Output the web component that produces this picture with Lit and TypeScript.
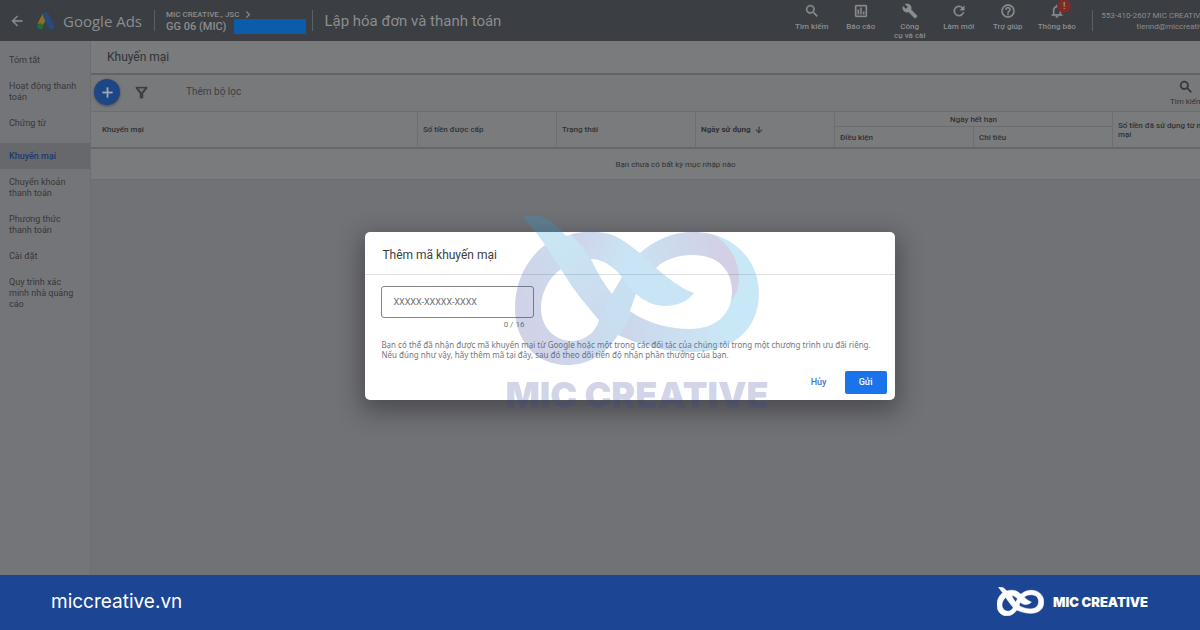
import { LitElement, html, css, svg } from "lit";
import { customElement } from "lit/decorators.js";
import { classMap } from "lit/directives/class-map.js";

const KNOT =
  "M523 217C530 215 542 215 549 220C556 225 561 231 566 236C580 231 600 230 615 236C625 241 632 247 640 253C655 240 672 232 693 232C735 232 759 262 759 293C759 330 732 352 692 352C665 352 640 345 618 335C605 355 588 365 567 365C535 365 515 340 515 308C515 280 528 258 545 245C540 237 530 225 523 217Z" +
  "M561 269C548 278 541 294 541 308C541 328 555 341 573 341C587 340 597 330 599 320C584 303 570 285 561 269Z" +
  "M591 259C603 259 614 267 622 277L612 294C604 284 597 272 591 259Z" +
  "M656 268C665 259 678 255 693 255C718 255 732 270 732 291C732 315 715 329 690 329C668 329 645 322 630 311L636 294C645 302 655 306 665 306C678 306 688 301 694 293C680 288 668 278 656 268Z";

const ICONS: Record<string, string> = {
  search:
    "M15.5 14h-.79l-.28-.27A6.47 6.47 0 0 0 16 9.500 6.500 6.500 0 1 0 9.500 16c1.610 0 3.090-.590 4.230-1.570l.270.280v.790l5 4.990L20.490 19l-4.990-5zm-6 0a4.500 4.500 0 1 1 0-9 4.500 4.500 0 0 1 0 9z",
  chart:
    "M19 3H5a2 2 0 0 0-2 2v14a2 2 0 0 0 2 2h14a2 2 0 0 0 2-2V5a2 2 0 0 0-2-2zm0 16H5V5h14v14zM7 10h2v7H7zm4-3h2v10h-2zm4 6h2v4h-2z",
  wrench:
    "M22.700 19l-9.100-9.100c.9-2.300.4-5-1.500-6.900-2-2-5-2.400-7.400-1.300L9 6 6 9 1.600 4.700C.4 7.100.9 10.100 2.900 12.100c1.900 1.900 4.600 2.400 6.900 1.500l9.100 9.100c.4.4 1 .4 1.400 0l2.300-2.300c.5-.4.5-1.100.1-1.400z",
  refresh:
    "M17.650 6.350A7.960 7.960 0 0 0 12 4a8 8 0 1 0 7.730 10h-2.080A6 6 0 1 1 12 6c1.660 0 3.140.690 4.220 1.780L13 11h7V4l-2.350 2.350z",
  help:
    "M11 18h2v-2h-2v2zm1-16a10 10 0 1 0 0 20 10 10 0 0 0 0-20zm0 18a8 8 0 1 1 0-16 8 8 0 0 1 0 16zm0-14a4 4 0 0 0-4 4h2a2 2 0 1 1 4 0c0 2-3 1.750-3 5h2c0-2.250 3-2.500 3-5a4 4 0 0 0-4-4z",
  bell:
    "M12 22a2 2 0 0 0 2-2h-4a2 2 0 0 0 2 2zm6-6v-5c0-3.070-1.630-5.640-4.500-6.320V4a1.500 1.500 0 0 0-3 0v.680C7.640 5.360 6 7.920 6 11v5l-2 2v1h16v-1l-2-2zm-2 1H8v-6c0-2.480 1.510-4.500 4-4.500s4 2.020 4 4.500v6z",
  back: "M20 11H7.830l5.590-5.590L12 4l-8 8 8 8 1.410-1.410L7.830 13H20v-2z",
  chevron: "M8 5l2-2 9 9-9 9-2-2 7-7z",
  plus: "M19 13h-6v6h-2v-6H5v-2h6V5h2v6h6v2z",
  filter: "M3 3h18v2.500l-6.500 8V21h-5v-7.500L3 5.500V3zm3.600 2.300l5.400 6.600 5.400-6.600H6.600z",
  down: "M20 12l-1.410-1.410L13 16.170V4h-2v12.170l-5.580-5.590L4 12l8 8 8-8z",
};

const icon = (name: string, size: number) => html`<svg
  width=${size}
  height=${size}
  viewBox="0 0 24 24"
  fill="currentColor"
  stroke="currentColor"
  stroke-width="0.500"
  aria-hidden="true"
>
  <path d=${ICONS[name]}></path>
</svg>`;

@customElement("ads-header")
class AdsHeader extends LitElement {
  static styles = css`
    :host {
      display: flex;
      align-items: center;
      height: 41px;
      box-sizing: border-box;
      overflow: hidden;
      background: #3b3e42;
      color: #8b8d90;
      font-family: Roboto, sans-serif;
      flex: none;
    }
    button {
      border: 0;
      padding: 0;
      background: none;
      color: inherit;
      font: inherit;
    }
    svg {
      display: block;
    }
    .back {
      margin-left: 9px;
    }
    .logo {
      margin: 0 8px 0 12px;
    }
    .brand {
      font: 15px/20px "Open Sans", sans-serif;
      width: 80px;
      white-space: nowrap;
    }
    .rule {
      width: 1px;
      height: 21px;
      background: #5c5f63;
      margin: 0 11px;
      flex: none;
    }
    .account {
      display: grid;
      font-weight: 500;
    }
    .parent {
      display: flex;
      align-items: center;
      gap: 4px;
      font-size: 8px;
      line-height: 10px;
      padding-top: 2px;
    }
    .child {
      display: flex;
      gap: 8px;
      font-size: 11px;
      line-height: 14px;
      height: 14px;
    }
    .mask {
      width: 72px;
      height: 15px;
      margin-top: -1px;
      background: #0b5cab;
    }
    .after {
      margin: 0 11px 0 6px;
    }
    .title {
      font-size: 15px;
      line-height: 20px;
      font-weight: 400;
      margin: 0;
      white-space: nowrap;
    }
    .tools {
      display: flex;
      align-self: flex-start;
      margin-left: auto;
      padding-top: 3px;
    }
    .tool {
      display: flex;
      flex-direction: column;
      align-items: center;
      gap: 3px;
      width: 49px;
      font-size: 8px;
      line-height: 9px;
      font-weight: 500;
      position: relative;
    }
    .badge {
      position: absolute;
      left: 25px;
      top: -4px;
      width: 14px;
      height: 14px;
      border-radius: 50%;
      background: #7d2a28;
      color: #a59a9a;
      font-size: 9px;
      line-height: 14px;
    }
    .user {
      font-size: 8px;
      line-height: 11px;
      text-align: right;
      white-space: nowrap;
      padding-right: 35px;
    }
    .tight {
      margin: 0 8px 0 11px;
    }
  `;

  tools = [
    ["search", "Tìm kiếm"],
    ["chart", "Báo cáo"],
    ["wrench", "Công"],
    ["refresh", "Làm mới"],
    ["help", "Trợ giúp"],
    ["bell", "Thông báo"],
  ];

  render() {
    return html`
      <button class="back" aria-label="Quay lại">${icon("back", 16)}</button>
      <svg class="logo" width="18" height="18" viewBox="0 0 18 18" aria-hidden="true">
        <path d="M8 3L3 13" stroke="#8a7424" stroke-width="5.500"></path>
        <path d="M8.800 3.200L14.500 14.500" stroke="#2a4a7c" stroke-width="6" stroke-linecap="round"></path>
        <circle cx="3.200" cy="14.200" r="3" fill="#256b3a"></circle>
      </svg>
      <span class="brand">Google Ads</span>
      <span class="rule"></span>
      <div class="account">
        <span class="parent">MIC CREATIVE., JSC ${icon("chevron", 9)}</span>
        <span class="child">GG 06 (MIC)<span class="mask"></span></span>
      </div>
      <span class="rule after"></span>
      <h1 class="title">Lập hóa đơn và thanh toán</h1>
      <nav class="tools">
        ${this.tools.map(
          ([name, label]) => html`<button class="tool">
            ${icon(name, 16)}<span>${label}${name === "wrench" ? html`<br />cụ và cài` : ""}</span>
            ${name === "bell" ? html`<span class="badge">!</span>` : ""}
          </button>`
        )}
      </nav>
      <span class="rule tight"></span>
      <div class="user">553-410-2607 MIC CREATIVE., JSC<br />tiennd@miccreative.com</div>
    `;
  }
}

@customElement("ads-sidebar")
class AdsSidebar extends LitElement {
  static styles = css`
    :host {
      display: block;
      flex: none;
      width: 91px;
      box-sizing: border-box;
      padding-top: 6px;
      background: #747578;
      border-right: 1px solid #6c6d70;
      font: 9px/11px Roboto, sans-serif;
    }
    .item {
      display: block;
      padding: 8px 12px 7px 9px;
      color: #36383b;
      text-decoration: none;
    }
    .active {
      margin-top: 7px;
      background: #67686b;
      color: #1c3a70;
      font-weight: 500;
    }
  `;

  items = [
    "Tóm tắt",
    "Hoạt động thanh toán",
    "Chứng từ",
    "Khuyến mại",
    "Chuyển khoản thanh toán",
    "Phương thức thanh toán",
    "Cài đặt",
    "Quy trình xác minh nhà quảng cáo",
  ];

  render() {
    return html`<nav>
      ${this.items.map(
        (t) => html`<a href="#" class=${classMap({ item: true, active: t === "Khuyến mại" })}>${t}</a>`
      )}
    </nav>`;
  }
}

@customElement("promo-page")
class PromoPage extends LitElement {
  static styles = css`
    :host {
      display: block;
      flex: 1;
      min-width: 0;
      background: #717276;
      color: #303235;
      font-family: Roboto, sans-serif;
    }
    button {
      border: 0;
      padding: 0;
      background: none;
      color: inherit;
      font: inherit;
    }
    svg {
      display: block;
    }
    .heading {
      margin: 0;
      padding: 0 16px;
      font-size: 12px;
      line-height: 32px;
      font-weight: 400;
      background: #7a7b7c;
      border-bottom: 2px solid #626366;
    }
    .bar {
      display: flex;
      align-items: center;
      height: 36px;
      box-sizing: border-box;
      padding: 0 61px 2px 3px;
      background: #78797b;
    }
    .add {
      display: grid;
      place-items: center;
      width: 26px;
      height: 26px;
      border-radius: 50%;
      background: #1d4684;
      color: #a3aab5;
      box-shadow: 0 1px 3px #4a4b4e;
    }
    .filter {
      margin: 0 37px 0 14px;
      color: #3d3f42;
    }
    .text {
      font-size: 10px;
      line-height: 12px;
      color: #3d3f42;
    }
    .find {
      display: grid;
      justify-items: center;
      gap: 2px;
      margin-left: auto;
      font-size: 8px;
      line-height: 10px;
      margin-right: -4px;
      padding-top: 2px;
    }
    table {
      width: 100%;
      table-layout: fixed;
      border-collapse: separate;
      border-spacing: 0;
      background: #7a7b7c;
      font-size: 8px;
      line-height: 9px;
    }
    .col {
      width: 139px;
    }
    .last {
      width: 147px;
    }
    th {
      box-sizing: border-box;
      padding: 0 5px;
      text-align: left;
      font-weight: 500;
      border-right: 1px solid #6d6e70;
      border-bottom: 2px solid #666769;
    }
    thead th {
      border-top: 1px solid #6c6d6f;
    }
    .first {
      padding-left: 11px;
    }
    .group {
      height: 15px;
      text-align: center;
      border-bottom: 0;
    }
    .sub {
      height: 23px;
    }
    .sort {
      display: flex;
      align-items: center;
      gap: 4px;
      font-weight: 700;
    }
    td {
      height: 30px;
      padding: 0;
      text-align: center;
      border-bottom: 1px solid #6c6d70;
    }
  `;

  render() {
    return html`
      <h2 class="heading">Khuyến mại</h2>
      <div class="bar">
        <button class="add" aria-label="Thêm">${icon("plus", 17)}</button>
        <button class="filter" aria-label="Bộ lọc">${icon("filter", 15)}</button>
        <button class="text">Thêm bộ lọc</button>
        <button class="find">${icon("search", 16)}Tìm kiếm</button>
      </div>
      <table>
        <colgroup>
          <col />
          <col class="col" /><col class="col" /><col class="col" /><col class="col" /><col class="col" />
          <col class="last" />
        </colgroup>
        <thead>
          <tr>
            <th rowspan="2" class="first">Khuyến mại</th>
            <th rowspan="2">Số tiền được cấp</th>
            <th rowspan="2">Trạng thái</th>
            <th rowspan="2"><span class="sort">Ngày sử dụng ${icon("down", 10)}</span></th>
            <th colspan="2" class="group">Ngày hết hạn</th>
            <th rowspan="2">Số tiền đã sử dụng từ mã khuyến<br />mại</th>
          </tr>
          <tr>
            <th class="sub">Điều kiện</th>
            <th class="sub">Chi tiêu</th>
          </tr>
        </thead>
        <tbody>
          <tr>
            <td colspan="7">Bạn chưa có bất kỳ mục nhập nào</td>
          </tr>
        </tbody>
      </table>
    `;
  }
}

@customElement("promo-dialog")
class PromoDialog extends LitElement {
  static styles = css`
    :host {
      display: block;
      width: 42%;
      min-width: 529px;
      box-sizing: border-box;
      background: #fff;
      border-radius: 5px;
      box-shadow: 0 8px 24px 4px rgba(30, 31, 34, 0.45);
      font-family: Roboto, sans-serif;
      color: #3c4043;
    }
    .title {
      margin: 0;
      padding: 14px 17px 9px;
      font-size: 12px;
      line-height: 19px;
      font-weight: 400;
      border-bottom: 1px solid #dfe0e2;
    }
    .body {
      padding: 11px 16px 0;
    }
    .field {
      display: block;
      width: 153px;
      height: 32px;
      box-sizing: border-box;
      padding: 0 11px;
      border: 1px solid #80868b;
      border-radius: 3px;
      background: none;
      font: 9px/12px Roboto, sans-serif;
    }
    .field::placeholder {
      color: #6a6d71;
      opacity: 1;
    }
    .count {
      display: block;
      width: 143px;
      text-align: right;
      font-size: 8px;
      line-height: 14px;
      color: #75787c;
    }
    .note {
      margin: 8px 0 0;
      font: 8px/10px "Noto Sans", sans-serif;
      color: #75787c;
      white-space: nowrap;
    }
    .actions {
      display: flex;
      justify-content: flex-end;
      gap: 8px;
      padding: 11px 8px 6px;
    }
    button {
      border: 0;
      border-radius: 2px;
      height: 23px;
      padding: 0;
      font: 500 9px/23px Roboto, sans-serif;
    }
    .cancel {
      width: 36px;
      background: none;
      color: #3c78c8;
    }
    .send {
      width: 42px;
      background: #1a73e8;
      color: #fff;
    }
  `;

  render() {
    return html`<div role="dialog" aria-labelledby="title">
      <h3 class="title" id="title">Thêm mã khuyến mại</h3>
      <div class="body">
        <input class="field" maxlength="16" placeholder="XXXXX-XXXXX-XXXX" aria-label="Thêm mã khuyến mại" />
        <span class="count">0 / 16</span>
        <p class="note">
          Bạn có thể đã nhận được mã khuyến mại từ Google hoặc một trong các đối tác của chúng tôi trong một chương
          trình ưu đãi riêng.<br />Nếu đúng như vậy, hãy thêm mã tại đây, sau đó theo dõi tiến độ nhận phần thưởng của
          bạn.
        </p>
      </div>
      <div class="actions">
        <button class="cancel">Hủy</button>
        <button class="send">Gửi</button>
      </div>
    </div>`;
  }
}

@customElement("app-root")
class AppRoot extends LitElement {
  static styles = css`
    :host {
      display: flex;
      flex-direction: column;
      height: 100vh;
      overflow: hidden;
    }
    .shot {
      flex: 1;
      min-height: 0;
      position: relative;
      overflow: hidden;
    }
    .frame {
      position: relative;
      display: flex;
      flex-direction: column;
      width: 105%;
      height: 110%;
    }
    .columns {
      display: flex;
      flex: 1;
    }
    .scrim {
      position: absolute;
      inset: 0;
      display: grid;
      place-items: center;
    }
    .watermark {
      position: absolute;
      inset: 0;
      display: flex;
      flex-direction: column;
      align-items: center;
      justify-content: center;
      padding: 58px 0 0 74px;
      box-sizing: border-box;
      pointer-events: none;
    }
    .stamp {
      font: 900 36px/46px Inter, sans-serif;
      color: rgba(50, 65, 150, 0.24);
      margin-top: 6px;
    }
    .footer {
      flex: none;
      display: flex;
      align-items: center;
      height: 55px;
      box-sizing: border-box;
      padding: 0 52px 2px 51px;
      background: #1c4594;
      color: #fff;
      font-family: Inter, sans-serif;
    }
    .site {
      font-size: 19px;
      line-height: 24px;
      color: inherit;
      text-decoration: none;
    }
    .brand {
      display: flex;
      align-items: center;
      gap: 9px;
      margin-left: auto;
      font-size: 13px;
      line-height: 20px;
      font-weight: 900;
    }
  `;

  knot() {
    return svg`
      <defs>
        <clipPath id="shape"><path d=${KNOT} clip-rule="evenodd"></path></clipPath>
        <linearGradient id="ring" gradientUnits="userSpaceOnUse" x1="530" y1="330" x2="612" y2="300">
          <stop offset="0" stop-color="#4c54a4"></stop><stop offset="1" stop-color="#2c83c8"></stop>
        </linearGradient>
        <linearGradient id="base" gradientUnits="userSpaceOnUse" x1="610" y1="330" x2="730" y2="310">
          <stop offset="0" stop-color="#4058ac"></stop><stop offset="1" stop-color="#2fa8de"></stop>
        </linearGradient>
        <linearGradient id="arch" gradientUnits="userSpaceOnUse" x1="635" y1="270" x2="725" y2="250">
          <stop offset="0" stop-color="#2f8fd0"></stop><stop offset="1" stop-color="#56489c"></stop>
        </linearGradient>
        <linearGradient id="leaf" gradientUnits="userSpaceOnUse" x1="565" y1="240" x2="645" y2="280">
          <stop offset="0" stop-color="#4a50a4"></stop><stop offset="0.700" stop-color="#2f98d4"></stop>
        </linearGradient>
        <linearGradient id="stem" gradientUnits="userSpaceOnUse" x1="555" y1="240" x2="605" y2="325">
          <stop offset="0" stop-color="#2f9fd8"></stop><stop offset="1" stop-color="#3b6cb8"></stop>
        </linearGradient>
      </defs>
      <g clip-path="url(#shape)" opacity="0.260">
        <path d="M510 210H765V370H510Z" fill="#2fa8de"></path>
        <path d="M590 300L640 300L760 330L760 370L600 370Z" fill="url(#base)"></path>
        <path d="M633 245C660 228 690 228 710 233C735 244 748 278 732 300L650 275L635 300L610 290Z" fill="url(#arch)"></path>
        <path d="M600 220L545 240L505 280L505 370H600L640 300L620 277L575 300L570 265Z" fill="url(#ring)"></path>
        <path d="M560 225H610L640 253L656 268L700 293L665 310L636 294L622 277L590 259L570 250Z" fill="url(#leaf)"></path>
        <path d="M515 210H555C563 230 580 240 590 259C597 272 604 284 612 294L599 320C584 303 570 285 561 269L545 245Z" fill="url(#stem)"></path>
      </g>`;
  }

  render() {
    return html`
      <main class="shot">
        <div class="frame">
          <ads-header></ads-header>
          <div class="columns">
            <ads-sidebar></ads-sidebar>
            <promo-page></promo-page>
          </div>
          <div class="scrim"><promo-dialog></promo-dialog></div>
        </div>
        <div class="watermark">
          <svg width="245" height="151" viewBox="515 215 245 151" aria-hidden="true">${this.knot()}</svg>
          <span class="stamp">MIC CREATIVE</span>
        </div>
      </main>
      <footer class="footer">
        <a class="site" href="#">miccreative.vn</a>
        <div class="brand">
          <svg width="47" height="29" viewBox="515 215 245 151" aria-hidden="true">
            <path d=${KNOT} fill="#fff" stroke="#fff" stroke-width="3" fill-rule="evenodd"></path>
          </svg>
          MIC CREATIVE
        </div>
      </footer>
    `;
  }
}
